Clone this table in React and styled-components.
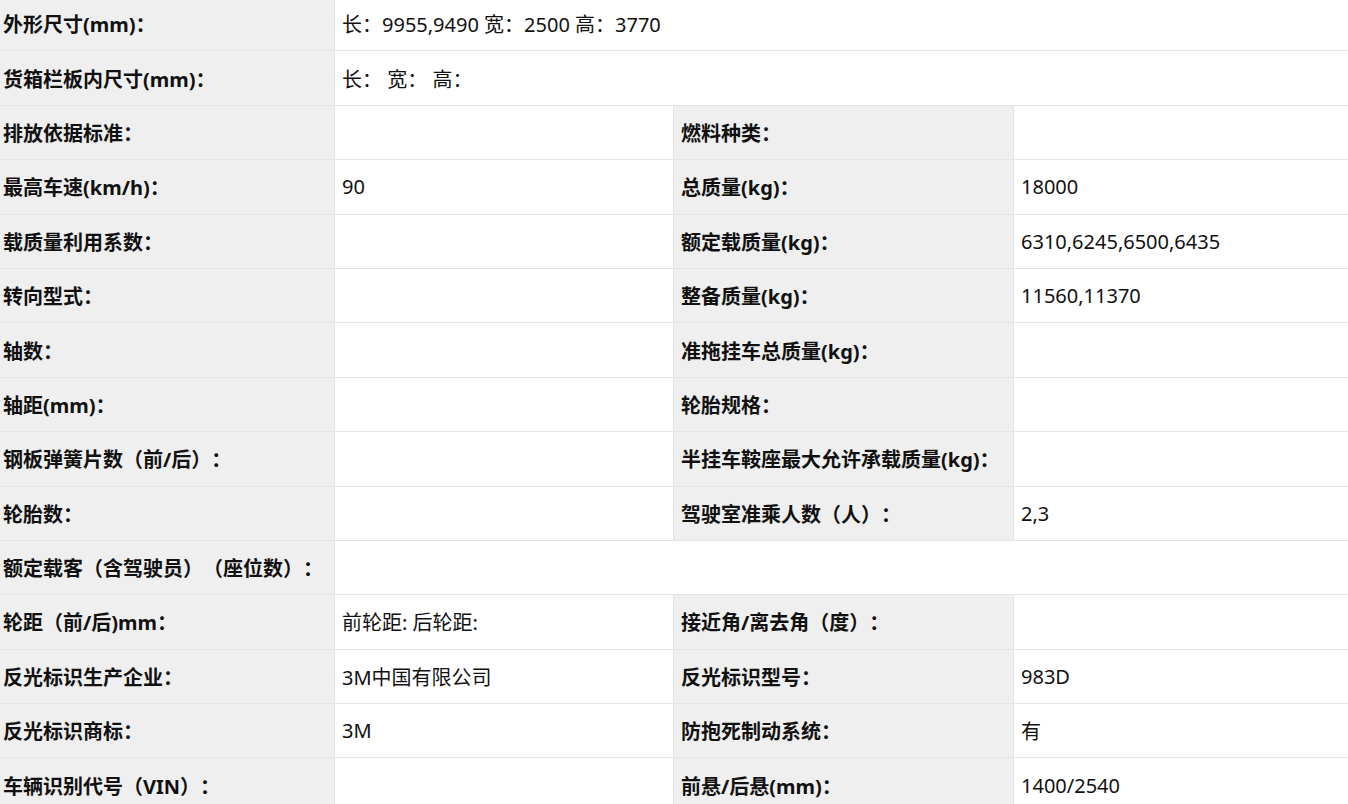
import React from "react";
import styled, { createGlobalStyle } from "styled-components";

const GlobalStyle = createGlobalStyle`
  html, body {
    margin: 0;
    padding: 0;
    background: #ffffff;
    overflow: hidden;
  }
  body {
    font-family: "Noto Sans", "Noto Sans CJK SC", "Liberation Sans", sans-serif;
    color: #000;
    text-spacing-trim: space-all;
  }
`;

const Sheet = styled.div`
  display: grid;
  grid-template-columns: 334px 338px 339px 1fr;
  grid-auto-rows: 53.4px;
  gap: 1px;
  background-color: #e4e4e4;
  margin-top: -3px;
  width: 1348px;
`;

const Label = styled.div`
  display: flex;
  align-items: center;
  background-color: #efefef;
  padding-left: ${(props) => (props.first ? "3px" : "7px")};
  font-size: 20px;
  font-weight: 700;
  color: #111;
  white-space: nowrap;
  text-spacing-trim: space-all;
`;

const Value = styled.div`
  display: flex;
  align-items: center;
  background-color: #ffffff;
  padding-left: 7px;
  font-size: 20px;
  font-weight: 400;
  color: #111;
  white-space: pre;
  text-spacing-trim: space-all;
  grid-column: ${(props) => (props.wide ? "span 3" : "auto")};
`;

const rows = [
  ["外形尺寸(mm)：", "长：9955,9490 宽：2500 高：3770"],
  ["货箱栏板内尺寸(mm)：", "长： 宽： 高："],
  ["排放依据标准：", "", "燃料种类：", ""],
  ["最高车速(km/h)：", "90", "总质量(kg)：", "18000"],
  ["载质量利用系数：", "", "额定载质量(kg)：", "6310,6245,6500,6435"],
  ["转向型式：", "", "整备质量(kg)：", "11560,11370"],
  ["轴数：", "", "准拖挂车总质量(kg)：", ""],
  ["轴距(mm)：", "", "轮胎规格：", ""],
  ["钢板弹簧片数（前/后）：", "", "半挂车鞍座最大允许承载质量(kg)：", ""],
  ["轮胎数：", "", "驾驶室准乘人数（人）：", "2,3"],
  ["额定载客（含驾驶员）（座位数）：", ""],
  ["轮距（前/后)mm：", "前轮距: 后轮距:", "接近角/离去角（度）：", ""],
  ["反光标识生产企业：", "3M中国有限公司", "反光标识型号：", "983D"],
  ["反光标识商标：", "3M", "防抱死制动系统：", "有"],
  ["车辆识别代号（VIN）：", "", "前悬/后悬(mm)：", "1400/2540"],
];

const App = () => {
  return (
    <>
      <GlobalStyle />
      <Sheet>
        {rows.map((row, i) =>
          row.length === 2 ? (
            <React.Fragment key={i}>
              <Label first>{row[0]}</Label>
              <Value wide>{row[1]}</Value>
            </React.Fragment>
          ) : (
            <React.Fragment key={i}>
              <Label first>{row[0]}</Label>
              <Value>{row[1]}</Value>
              <Label>{row[2]}</Label>
              <Value>{row[3]}</Value>
            </React.Fragment>
          )
        )}
      </Sheet>
    </>
  );
};

export default App;
